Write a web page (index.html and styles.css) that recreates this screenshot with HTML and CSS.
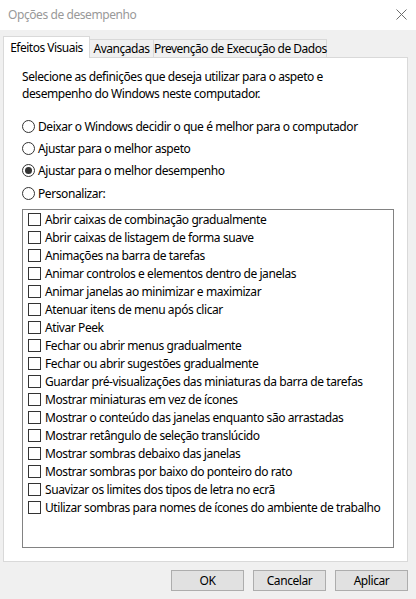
FILE: index.html
```html
<!DOCTYPE html>
<html lang="pt">
<head>
<meta charset="utf-8">
<title>Opções de desempenho</title>
<link rel="stylesheet" href="styles.css">
</head>
<body>
<div class="window">
  <div class="titlebar">
    <span class="title">Opções de desempenho</span>
    <svg class="close" width="11" height="11" viewBox="0 0 11 11"><path d="M0.5 0.5 L10.5 10.5 M10.5 0.5 L0.5 10.5" stroke="#6d6d6d" stroke-width="1" fill="none"/></svg>
  </div>
  <div class="body">
    <div class="tabs">
      <div class="tab active tab-visual">Efeitos Visuais</div>
      <div class="tab tab-adv">Avançadas</div>
      <div class="tab tab-dep">Prevenção de Execução de Dados</div>
    </div>
    <div class="panel">
      <p class="desc">Selecione as definições que deseja utilizar para o aspeto e desempenho do Windows neste computador.</p>
      <div class="radios">
        <label class="radio"><span class="circle"></span><span>Deixar o Windows decidir o que é melhor para o computador</span></label>
        <label class="radio"><span class="circle"></span><span>Ajustar para o melhor aspeto</span></label>
        <label class="radio"><span class="circle checked"></span><span>Ajustar para o melhor desempenho</span></label>
        <label class="radio"><span class="circle"></span><span>Personalizar:</span></label>
      </div>
      <div class="listbox">
        <div class="check"><span class="box"></span><span>Abrir caixas de combinação gradualmente</span></div>
        <div class="check"><span class="box"></span><span>Abrir caixas de listagem de forma suave</span></div>
        <div class="check"><span class="box"></span><span>Animações na barra de tarefas</span></div>
        <div class="check"><span class="box"></span><span>Animar controlos e elementos dentro de janelas</span></div>
        <div class="check"><span class="box"></span><span>Animar janelas ao minimizar e maximizar</span></div>
        <div class="check"><span class="box"></span><span>Atenuar itens de menu após clicar</span></div>
        <div class="check"><span class="box"></span><span>Ativar Peek</span></div>
        <div class="check"><span class="box"></span><span>Fechar ou abrir menus gradualmente</span></div>
        <div class="check"><span class="box"></span><span>Fechar ou abrir sugestões gradualmente</span></div>
        <div class="check"><span class="box"></span><span>Guardar pré-visualizações das miniaturas da barra de tarefas</span></div>
        <div class="check"><span class="box"></span><span>Mostrar miniaturas em vez de ícones</span></div>
        <div class="check"><span class="box"></span><span>Mostrar o conteúdo das janelas enquanto são arrastadas</span></div>
        <div class="check"><span class="box"></span><span>Mostrar retângulo de seleção translúcido</span></div>
        <div class="check"><span class="box"></span><span>Mostrar sombras debaixo das janelas</span></div>
        <div class="check"><span class="box"></span><span>Mostrar sombras por baixo do ponteiro do rato</span></div>
        <div class="check"><span class="box"></span><span>Suavizar os limites dos tipos de letra no ecrã</span></div>
        <div class="check"><span class="box"></span><span>Utilizar sombras para nomes de ícones do ambiente de trabalho</span></div>
      </div>
    </div>
    <div class="buttons">
      <button class="btn">OK</button>
      <button class="btn">Cancelar</button>
      <button class="btn">Aplicar</button>
    </div>
  </div>
</div>
</body>
</html>
```

FILE: styles.css
```css
html, body {
  margin: 0;
  padding: 0;
}
body {
  width: 416px;
  height: 599px;
  overflow: hidden;
  background: #f0f0f0;
  font-family: "Noto Sans", "Open Sans", sans-serif;
  font-size: 12px;
  letter-spacing: -0.42px;
  color: #000;
}
.window {
  display: flex;
  flex-direction: column;
  width: 416px;
  height: 599px;
}
.titlebar {
  height: 30px;
  background: #fff;
  display: flex;
  align-items: center;
  justify-content: space-between;
  padding: 0 8px 2px 8px;
  box-sizing: border-box;
}
.title {
  font-size: 12px;
  color: #999;
}
.close {
  margin-right: 1px;
}
.body {
  padding: 6px 8px 0 3px;
  display: flex;
  flex-direction: column;
}
.tabs {
  display: flex;
  align-items: flex-end;
  height: 21px;
  position: relative;
  z-index: 1;
}
.tab {
  height: 18px;
  line-height: 17px;
  box-sizing: border-box;
  border: 1px solid #d9d9d9;
  border-bottom: none;
  background: #f0f0f0;
  margin-left: -1px;
  white-space: nowrap;
  text-align: center;
  letter-spacing: -0.5px;
}
.tab.active {
  height: 22px;
  line-height: 21px;
  background: #fff;
  margin-left: 0;
  margin-bottom: -1px;
}
.tab-visual { width: 87px; }
.tab-adv { width: 65px; }
.tab-dep { width: 174px; }
.panel {
  background: #fff;
  border: 1px solid #d9d9d9;
  height: 505px;
  box-sizing: border-box;
  padding: 10px 13px 0 18px;
}
.desc {
  margin: 0;
  line-height: 17px;
}
.radios {
  margin-top: 13px;
  display: flex;
  flex-direction: column;
}
.radio {
  display: flex;
  align-items: center;
  height: 22.3px;
  gap: 3px;
  white-space: nowrap;
}
.circle {
  width: 13px;
  height: 13px;
  box-sizing: border-box;
  border: 1px solid #333;
  border-radius: 50%;
  background: #fff;
  display: flex;
  align-items: center;
  justify-content: center;
  flex: none;
}
.circle.checked::after {
  content: "";
  width: 7px;
  height: 7px;
  border-radius: 50%;
  background: #333;
}
.listbox {
  margin-top: 5px;
  height: 339px;
  box-sizing: border-box;
  border: 1px solid #828282;
  padding: 0 0 0 5px;
}
.check {
  display: flex;
  align-items: center;
  height: 18px;
  gap: 4px;
  white-space: nowrap;
}
.box {
  width: 13px;
  height: 13px;
  box-sizing: border-box;
  border: 1px solid #333;
  background: #fff;
  flex: none;
}
.buttons {
  display: flex;
  justify-content: flex-end;
  gap: 9px;
  margin-top: 8px;
  padding-right: 0;
}
.btn {
  width: 73px;
  height: 21px;
  box-sizing: border-box;
  border: 1px solid #adadad;
  background: #e1e1e1;
  font-family: inherit;
  font-size: 12px;
  letter-spacing: -0.42px;
  color: #000;
  padding: 0;
  margin: 0;
}
```
